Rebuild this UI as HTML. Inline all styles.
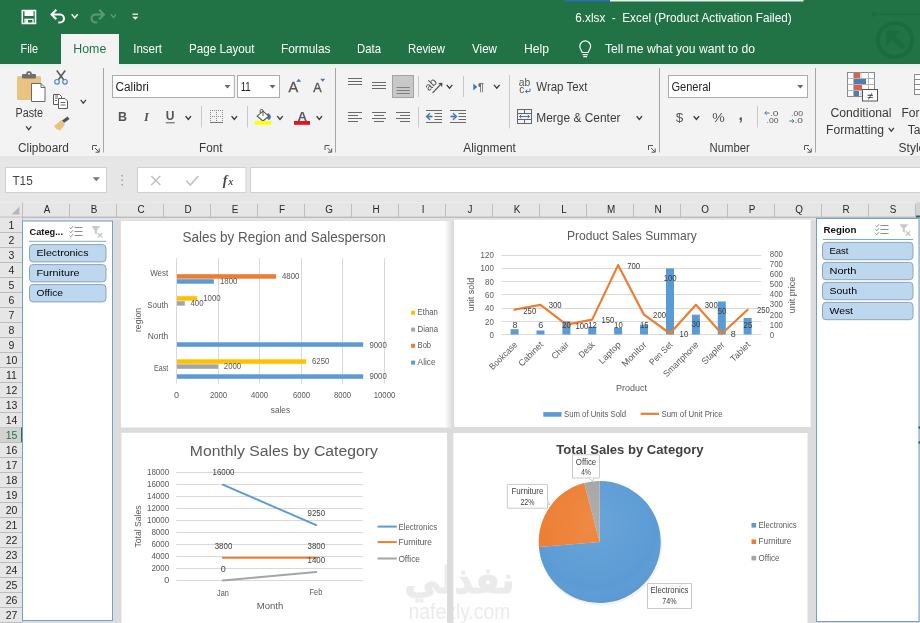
<!DOCTYPE html>
<html><head><meta charset="utf-8"><title>6.xlsx - Excel</title>
<style>
html,body{margin:0;padding:0;background:#fff;overflow:hidden}
body{width:920px;height:623px;position:relative;font-family:'Liberation Sans', 'DejaVu Sans', sans-serif}
svg{position:absolute;left:0;top:0;display:block;will-change:transform}
svg text{font-family:'Liberation Sans', 'DejaVu Sans', sans-serif;white-space:pre}
</style></head><body>
<svg width="920" height="623" viewBox="0 0 920 623">
<rect x="0" y="0" width="920" height="64" fill="#217346"/>
<rect x="564.5" y="0" width="46" height="1.5" fill="#2b6cae"/>
<rect x="610" y="0" width="193.5" height="1.5" fill="#e4efe8"/>
<g opacity="0.8"><circle cx="895" cy="40" r="17" fill="none" stroke="#1c6a3f" stroke-width="4"/><path d="M886 30.5H901L886 47z" fill="#1c6a3f"/><path d="M890 35L904 47.5" stroke="#1c6a3f" stroke-width="5"/><path d="M880 14H920" stroke="#1d6b40" stroke-width="2"/><path d="M872 10.5v7l8-3.5z" fill="#1d6b40"/></g>
<g fill="none" stroke="#fff" stroke-width="1.6"><path d="M22.3 10.5H35.5V23.5H22.3z"/></g>
<rect x="24.5" y="11" width="9" height="5" fill="#fff"/><rect x="25" y="19.3" width="8" height="4" fill="none" stroke="#fff" stroke-width="1.3"/><rect x="26" y="20" width="2" height="3" fill="#fff"/>
<path d="M52 14.5H60A4 4 0 0 1 60 22.5H58.3" fill="none" stroke="#fff" stroke-width="2.1"/><path d="M56.3 9.8L51.6 14.5L56.3 19.2" fill="none" stroke="#fff" stroke-width="2.1"/>
<path d="M71.7 14.35L74.7 17.8L77.7 14.35" fill="none" stroke="#fff" stroke-width="1.5"/>
<g opacity="0.27"><path d="M103.5 14.5H95.5A4 4 0 0 0 95.5 22.5H97.2" fill="none" stroke="#fff" stroke-width="2.1"/><path d="M99.2 9.8L103.9 14.5L99.2 19.2" fill="none" stroke="#fff" stroke-width="2.1"/></g>
<g opacity="0.27">
<path d="M110.9 14.5L113.5 17.5L116.1 14.5" fill="none" stroke="#fff" stroke-width="1.4"/>
</g>
<path d="M132.5 14.2h5.5" stroke="#fff" stroke-width="1.2"/><path d="M132.3 16.8h6l-3 3z" fill="#fff"/>
<text x="575.2" y="21.8" font-size="12.5" fill="#fff" textLength="216.5" lengthAdjust="spacingAndGlyphs">6.xlsx  -  Excel (Product Activation Failed)</text>
<rect x="61" y="34" width="58" height="31" fill="#f3f3f3"/>
<text x="20.5" y="53" font-size="13" fill="#fff" textLength="17.5" lengthAdjust="spacingAndGlyphs">File</text>
<text x="133.2" y="53" font-size="13" fill="#fff" textLength="28.8" lengthAdjust="spacingAndGlyphs">Insert</text>
<text x="189" y="53" font-size="13" fill="#fff" textLength="65.5" lengthAdjust="spacingAndGlyphs">Page Layout</text>
<text x="281" y="53" font-size="13" fill="#fff" textLength="49.5" lengthAdjust="spacingAndGlyphs">Formulas</text>
<text x="357" y="53" font-size="13" fill="#fff" textLength="24" lengthAdjust="spacingAndGlyphs">Data</text>
<text x="408" y="53" font-size="13" fill="#fff" textLength="37" lengthAdjust="spacingAndGlyphs">Review</text>
<text x="472" y="53" font-size="13" fill="#fff" textLength="25" lengthAdjust="spacingAndGlyphs">View</text>
<text x="524" y="53" font-size="13" fill="#fff" textLength="25" lengthAdjust="spacingAndGlyphs">Help</text>
<text x="73.3" y="53" font-size="13" fill="#217346" textLength="33" lengthAdjust="spacingAndGlyphs">Home</text>
<text x="605" y="53" font-size="13" fill="#fff" textLength="150" lengthAdjust="spacingAndGlyphs">Tell me what you want to do</text>
<g fill="none" stroke="#fff" stroke-width="1.2"><path d="M582.2 52.5C582 50.5 579.8 49.5 579.8 46.3A5.4 5.4 0 0 1 590.6 46.3C590.6 49.5 588.4 50.5 588.2 52.5z"/><path d="M582.6 54.6h5.2M583.3 56.6h3.8"/></g>
<rect x="0" y="64" width="920" height="93" fill="#f3f3f3"/>
<defs><linearGradient id="mint" x1="0" y1="0" x2="0" y2="1"><stop offset="0" stop-color="#e2f3ea"/><stop offset="1" stop-color="#f3f3f3"/></linearGradient></defs><rect x="0" y="64" width="920" height="5" fill="url(#mint)"/><rect x="61" y="64" width="58" height="5" fill="#f3f3f3"/>
<rect x="0" y="156.5" width="920" height="1" fill="#d6d6d6"/>
<rect x="0" y="157.5" width="920" height="45" fill="#e6e6e6"/>
<rect x="17" y="76" width="24" height="24" rx="1.5" fill="#eac282"/>
<rect x="22" y="74" width="14" height="4.5" rx="1" fill="#6f6f6f"/><rect x="26.3" y="71.3" width="5.4" height="5" rx="2" fill="#6f6f6f"/><rect x="28" y="73" width="2" height="1.8" rx="0.8" fill="#f3f3f3"/>
<path d="M31.5 83.5H41L45 87.5V101.5H31.5z" fill="#fff" stroke="#6a6a6a" stroke-width="1"/><path d="M41 83.5V87.5H45" fill="none" stroke="#6a6a6a" stroke-width="1"/>
<text x="15.5" y="117" font-size="12" fill="#3a3a3a" textLength="27.5" lengthAdjust="spacingAndGlyphs">Paste</text>
<path d="M26.099999999999998 126.4L28.7 129.7L31.3 126.4" fill="none" stroke="#3a3a3a" stroke-width="1.2"/>
<g fill="none" stroke="#5a5a5a" stroke-width="1.6"><path d="M56.8 70.5L63.8 80M65.2 70.5L58.2 80"/></g><g fill="none" stroke="#4f8ad0" stroke-width="1.2"><circle cx="57" cy="81.8" r="2.3"/><circle cx="65" cy="81.8" r="2.3"/></g>
<g fill="#fff" stroke="#5a5a5a" stroke-width="1"><path d="M53.5 94.5H59.5L61.5 96.5V104.5H53.5z"/><path d="M58.5 98.5H65L67.5 101V108.5H58.5z"/></g><path d="M55 98h3M55 100.5h2M60.5 102.5h5M60.5 105h5M55 96h3" stroke="#5a5a5a" stroke-width="0.9"/>
<path d="M80.7 99.9L83.3 103.2L85.89999999999999 99.9" fill="none" stroke="#3a3a3a" stroke-width="1.2"/>
<path d="M62 120.5L67.5 116.5L69.5 119L64 123z" fill="#555"/><path d="M54 126L61.5 120L65 124.5L60 130.5L56.5 129z" fill="#eac282"/>
<text x="18" y="152" font-size="12" fill="#3a3a3a" textLength="50.8" lengthAdjust="spacingAndGlyphs">Clipboard</text>
<path d="M92.5 150V145.5H97M95 148L99 152M99.2 148.5V152.2H95.5" fill="none" stroke="#555" stroke-width="1"/>
<path d="M103.5 68V152.5" stroke="#a6a6a6" stroke-width="1"/>
<rect x="112.5" y="75.5" width="121.8" height="22" fill="#fff" stroke="#ababab" stroke-width="1"/>
<text x="115.5" y="91" font-size="12" fill="#262626" textLength="33.5" lengthAdjust="spacingAndGlyphs">Calibri</text>
<path d="M224.5 85.0h6L227.5 88.5z" fill="#666"/>
<rect x="237.5" y="75.5" width="42" height="22" fill="#fff" stroke="#ababab" stroke-width="1"/>
<text x="240.7" y="91" font-size="12" fill="#262626" textLength="10" lengthAdjust="spacingAndGlyphs">11</text>
<path d="M269.5 85.0h6L272.5 88.5z" fill="#666"/>
<text x="288.5" y="92" font-size="14.5" fill="#555" stroke="#555" stroke-width="0.35">A</text>
<path d="M296.2 81.8h5l-2.5-3z" fill="#3f77bd"/>
<text x="313.2" y="92" font-size="12.5" fill="#555" stroke="#555" stroke-width="0.35">A</text>
<path d="M320.2 78.8h5l-2.5 3z" fill="#3f77bd"/>
<text x="118" y="120.8" font-size="12.5" fill="#555" font-weight="bold">B</text>
<text x="144" y="120.8" font-size="12.5" fill="#555" font-weight="bold" font-style="italic" style="font-family:'Liberation Serif',serif">I</text>
<text x="165.8" y="120.3" font-size="12" fill="#555" font-weight="bold">U</text>
<path d="M165.8 122.8h9" stroke="#555" stroke-width="1"/>
<path d="M185.60000000000002 116.10000000000001L188.3 119.4L191.0 116.10000000000001" fill="none" stroke="#3a3a3a" stroke-width="1.4"/>
<path d="M201.5 106V127.5" stroke="#c8c8c8" stroke-width="1"/>
<g stroke="#8a8a8a" stroke-width="1" stroke-dasharray="1 1" fill="none"><path d="M210 110.5H223M210 116.5H223"/><path d="M210.5 110V123M216.5 110V123M222.5 110V123"/></g><path d="M210 122.5H223" stroke="#777" stroke-width="1"/>
<path d="M231.60000000000002 116.10000000000001L234.3 119.4L237.0 116.10000000000001" fill="none" stroke="#3a3a3a" stroke-width="1.4"/>
<path d="M247.5 106V127.5" stroke="#c8c8c8" stroke-width="1"/>
<path d="M268 113C270.2 114.2 271.2 116 270.8 117.6C270.4 119 269.6 119.8 268.6 120L266 117z" fill="#3f77bd"/><path d="M257.2 116.2L263 111.2L268.7 116.2L263 121z" fill="#fff" stroke="#555" stroke-width="1.1"/><path d="M260.2 113V110.6a1 1 0 0 1 1-1h0.8a1 1 0 0 1 1 1V116" fill="none" stroke="#555" stroke-width="1"/>
<rect x="254.8" y="121" width="16.5" height="3.8" fill="#ffff00"/>
<path d="M277.3 116.10000000000001L280 119.4L282.7 116.10000000000001" fill="none" stroke="#3a3a3a" stroke-width="1.4"/>
<text x="297.6" y="121" font-size="13.4" fill="#5a5a5a" textLength="9.6" lengthAdjust="spacingAndGlyphs" font-weight="bold">A</text>
<rect x="294" y="121" width="16" height="3.8" fill="#e81123"/>
<path d="M316.6 116.10000000000001L319.3 119.4L322.0 116.10000000000001" fill="none" stroke="#3a3a3a" stroke-width="1.4"/>
<text x="199" y="152" font-size="12" fill="#3a3a3a" textLength="23.5" lengthAdjust="spacingAndGlyphs">Font</text>
<path d="M325.0 150V145.5H329.5M327.5 148L331.5 152M331.7 148.5V152.2H328.0" fill="none" stroke="#555" stroke-width="1"/>
<path d="M335.5 68V152.5" stroke="#a6a6a6" stroke-width="1"/>
<path d="M348 78.5h14" stroke="#6a6a6a" stroke-width="1"/>
<path d="M348 81.5h14" stroke="#6a6a6a" stroke-width="1"/>
<path d="M348 84.5h14" stroke="#6a6a6a" stroke-width="1"/>
<path d="M372 82.5h14" stroke="#6a6a6a" stroke-width="1"/>
<path d="M372 85.5h14" stroke="#6a6a6a" stroke-width="1"/>
<path d="M372 88.5h14" stroke="#6a6a6a" stroke-width="1"/>
<rect x="392.5" y="75.5" width="21" height="22" fill="#c8c8c8" stroke="#a3a3a3" stroke-width="1"/>
<path d="M396.5 87.5h13.5" stroke="#808080" stroke-width="1"/>
<path d="M396.5 90.5h13.5" stroke="#808080" stroke-width="1"/>
<path d="M396.5 93.5h13.5" stroke="#808080" stroke-width="1"/>
<path d="M418.5 76V97" stroke="#c8c8c8" stroke-width="1"/>
<text transform="translate(429 91.4) rotate(-45)" font-size="11.5" fill="#4a4a4a" textLength="12.3" lengthAdjust="spacingAndGlyphs">ab</text><path d="M432.6 92.8L441.5 83.7M441.9 83.3l-3.2 0.3M441.9 83.3l-0.3 3.2" stroke="#4a4a4a" stroke-width="1.2" fill="none"/>
<path d="M446.7 84.9L449.5 88.2L452.3 84.9" fill="none" stroke="#3a3a3a" stroke-width="1.3"/>
<path d="M348 112.5h14" stroke="#6a6a6a" stroke-width="1"/>
<path d="M348 115.5h10" stroke="#6a6a6a" stroke-width="1"/>
<path d="M348 118.5h14" stroke="#6a6a6a" stroke-width="1"/>
<path d="M348 121.5h10" stroke="#6a6a6a" stroke-width="1"/>
<path d="M372.0 112.5h14" stroke="#6a6a6a" stroke-width="1"/>
<path d="M374.0 115.5h10" stroke="#6a6a6a" stroke-width="1"/>
<path d="M372.0 118.5h14" stroke="#6a6a6a" stroke-width="1"/>
<path d="M374.0 121.5h10" stroke="#6a6a6a" stroke-width="1"/>
<path d="M396 112.5h14" stroke="#6a6a6a" stroke-width="1"/>
<path d="M400 115.5h10" stroke="#6a6a6a" stroke-width="1"/>
<path d="M396 118.5h14" stroke="#6a6a6a" stroke-width="1"/>
<path d="M400 121.5h10" stroke="#6a6a6a" stroke-width="1"/>
<path d="M418.5 107V127.5" stroke="#c8c8c8" stroke-width="1"/>
<path d="M426 110.5h16" stroke="#6a6a6a" stroke-width="1"/>
<path d="M426 122.5h16" stroke="#6a6a6a" stroke-width="1"/>
<path d="M434.5 113.5h7.5" stroke="#6a6a6a" stroke-width="1"/>
<path d="M434.5 116.5h7.5" stroke="#6a6a6a" stroke-width="1"/>
<path d="M434.5 119.5h7.5" stroke="#6a6a6a" stroke-width="1"/>
<path d="M432.5 116.5H427.5" stroke="#3f77bd" stroke-width="1.7" fill="none"/><path d="M430 113.3l-3.4 3.2l3.4 3.2" stroke="#3f77bd" stroke-width="1.5" fill="none"/>
<path d="M450 110.5h16" stroke="#6a6a6a" stroke-width="1"/>
<path d="M450 122.5h16" stroke="#6a6a6a" stroke-width="1"/>
<path d="M458.5 113.5h7.5" stroke="#6a6a6a" stroke-width="1"/>
<path d="M458.5 116.5h7.5" stroke="#6a6a6a" stroke-width="1"/>
<path d="M458.5 119.5h7.5" stroke="#6a6a6a" stroke-width="1"/>
<path d="M450.5 116.5H455.5" stroke="#3f77bd" stroke-width="1.7" fill="none"/><path d="M453 113.3l3.4 3.2l-3.4 3.2" stroke="#3f77bd" stroke-width="1.5" fill="none"/>
<path d="M463.5 76V97" stroke="#c8c8c8" stroke-width="1"/>
<path d="M473.3 83.5v7l4-3.5z" fill="#3f77bd"/>
<text x="478" y="90.5" font-size="10.5" fill="#6a6a6a" font-weight="bold">¶</text>
<path d="M494.0 84.9L496.8 88.2L499.6 84.9" fill="none" stroke="#3a3a3a" stroke-width="1.3"/>
<path d="M509.5 75V128.5" stroke="#c8c8c8" stroke-width="1"/>
<text x="518.7" y="85.8" font-size="10" fill="#555" textLength="11.5" lengthAdjust="spacingAndGlyphs">ab</text>
<text x="519.3" y="92.5" font-size="10" fill="#555">c</text>
<path d="M530 88.5V91.5H525.5M527.3 89.7l-1.9 1.8l1.9 1.8" stroke="#3f77bd" stroke-width="1" fill="none"/>
<text x="536.3" y="91" font-size="12" fill="#3a3a3a" textLength="51.2" lengthAdjust="spacingAndGlyphs">Wrap Text</text>
<g fill="none" stroke="#666" stroke-width="1"><rect x="517.5" y="109.5" width="14" height="14"/><path d="M517.5 113.5H531.5M517.5 119.5H531.5M524.5 109.5V113.5M524.5 119.5V123.5"/></g><path d="M519.5 116.5H529.5M521.3 114.8l-1.8 1.7l1.8 1.7M527.7 114.8l1.8 1.7l-1.8 1.7" stroke="#3f77bd" stroke-width="1" fill="none"/>
<text x="536.3" y="122.3" font-size="12" fill="#3a3a3a" textLength="84.2" lengthAdjust="spacingAndGlyphs">Merge &amp; Center</text>
<path d="M636.5999999999999 116.10000000000001L639.3 119.4L642.0 116.10000000000001" fill="none" stroke="#3a3a3a" stroke-width="1.4"/>
<text x="463.3" y="152" font-size="12" fill="#3a3a3a" textLength="52.5" lengthAdjust="spacingAndGlyphs">Alignment</text>
<path d="M648.5 150V145.5H653M651 148L655 152M655.2 148.5V152.2H651.5" fill="none" stroke="#555" stroke-width="1"/>
<path d="M659.5 68V152.5" stroke="#a6a6a6" stroke-width="1"/>
<rect x="668.5" y="75.5" width="139" height="22" fill="#fff" stroke="#ababab" stroke-width="1"/>
<text x="671.4" y="91" font-size="12" fill="#262626" textLength="39.4" lengthAdjust="spacingAndGlyphs">General</text>
<path d="M797.3 85.0h6L800.3 88.5z" fill="#666"/>
<text x="675.8" y="121.5" font-size="13.5" fill="#555">$</text>
<path d="M693.6999999999999 116.10000000000001L696.4 119.4L699.1 116.10000000000001" fill="none" stroke="#3a3a3a" stroke-width="1.4"/>
<text x="712.3" y="121.5" font-size="13.5" fill="#555" textLength="12.5" lengthAdjust="spacingAndGlyphs">%</text>
<text x="738.5" y="119.5" font-size="16" fill="#555" font-weight="bold">,</text>
<path d="M757.5 106V127.5" stroke="#c8c8c8" stroke-width="1"/>
<text x="770" y="115.5" font-size="8" fill="#555" textLength="8.5" lengthAdjust="spacingAndGlyphs">.0</text>
<text x="766.5" y="123.3" font-size="8" fill="#555" textLength="12" lengthAdjust="spacingAndGlyphs">.00</text>
<path d="M769.5 113H764.8M766.6 111.2l-1.8 1.8l1.8 1.8" stroke="#3f77bd" stroke-width="1" fill="none"/>
<text x="791" y="115.5" font-size="8" fill="#555" textLength="12" lengthAdjust="spacingAndGlyphs">.00</text>
<text x="794.5" y="123.3" font-size="8" fill="#555" textLength="8.5" lengthAdjust="spacingAndGlyphs">.0</text>
<path d="M789.3 121H794M792.2 119.2l1.8 1.8l-1.8 1.8" stroke="#3f77bd" stroke-width="1" fill="none"/>
<text x="709.6" y="152" font-size="12" fill="#3a3a3a" textLength="40.2" lengthAdjust="spacingAndGlyphs">Number</text>
<path d="M804.5 150V145.5H809M807 148L811 152M811.2 148.5V152.2H807.5" fill="none" stroke="#555" stroke-width="1"/>
<path d="M815.5 68V152.5" stroke="#a6a6a6" stroke-width="1"/>
<g><rect x="847.5" y="72.5" width="27" height="24" fill="#fff" stroke="#8a8a8a" stroke-width="1"/><path d="M847.5 78.5H874.5M847.5 84.5H874.5M847.5 90.5H874.5M853.5 72.5V96.5M868.5 72.5V96.5M861 72.5V96.5" stroke="#b5b5b5" stroke-width="1" fill="none"/><rect x="854" y="73" width="6" height="5" fill="#d9634a"/><rect x="854" y="79" width="12" height="5" fill="#4a7ebb"/><rect x="854" y="85" width="8" height="5" fill="#d9634a"/><rect x="854" y="91" width="5" height="5" fill="#4a7ebb"/><rect x="862.5" y="89.5" width="15" height="11.5" fill="#fff" stroke="#555" stroke-width="1"/></g>
<text x="870" y="99.5" font-size="11" fill="#333" text-anchor="middle">≠</text>
<text x="830.5" y="117" font-size="12" fill="#3a3a3a" textLength="61" lengthAdjust="spacingAndGlyphs">Conditional</text>
<text x="826" y="134" font-size="12" fill="#3a3a3a" textLength="58" lengthAdjust="spacingAndGlyphs">Formatting</text>
<path d="M888.6999999999999 127.9L891.3 131.2L893.9 127.9" fill="none" stroke="#3a3a3a" stroke-width="1.2"/>
<text x="901.5" y="117" font-size="12" fill="#3a3a3a">Format as</text>
<text x="907.8" y="134" font-size="12" fill="#3a3a3a">Table</text>
<text x="898.6" y="152" font-size="12" fill="#3a3a3a">Styles</text>
<g><rect x="914.5" y="74.5" width="10" height="20" fill="#fff" stroke="#8a8a8a"/><path d="M914.5 79.5h8M914.5 84.5h8M914.5 89.5h8" stroke="#8a8a8a"/></g>
<rect x="5.5" y="167.5" width="101" height="25" fill="#fff" stroke="#d0d0d0" stroke-width="1"/>
<text x="12.4" y="184.8" font-size="12.5" fill="#444" textLength="20.3" lengthAdjust="spacingAndGlyphs">T15</text>
<path d="M92.7 177.2h7.2L96.3 181.3z" fill="#777"/>
<g fill="#a0a0a0"><rect x="121.5" y="175" width="1.5" height="1.5"/><rect x="121.5" y="179.5" width="1.5" height="1.5"/><rect x="121.5" y="184" width="1.5" height="1.5"/></g>
<rect x="137.5" y="167.5" width="108.5" height="25" fill="#fff" stroke="#d0d0d0" stroke-width="1"/>
<path d="M151.3 176l9 9M160.3 176l-9 9" stroke="#c0c0c0" stroke-width="1.6" fill="none"/>
<path d="M186.3 180.8l4 4.2l8-9" stroke="#c0c0c0" stroke-width="1.6" fill="none"/>
<text x="222.8" y="185" font-size="14" fill="#4a4a4a" font-weight="bold" font-style="italic" style="font-family:'Liberation Serif',serif">f</text>
<text x="228.3" y="185.3" font-size="10" fill="#4a4a4a" font-weight="bold" font-style="italic" style="font-family:'Liberation Serif',serif">x</text>
<rect x="250.5" y="167.5" width="680" height="25" fill="#fff" stroke="#d0d0d0" stroke-width="1"/>
<rect x="0" y="202.5" width="920" height="15" fill="#e6e6e6"/>
<rect x="0" y="217.5" width="920" height="406" fill="#dcdcdc"/>
<rect x="22.5" y="217.5" width="898" height="3" fill="#e4e4e4"/>
<rect x="0" y="216.7" width="920" height="1" fill="#ababab"/>
<path d="M19.5 206.5V214.5H11.5z" fill="#b7b7b7"/>
<path d="M22.5 204V217" stroke="#bdbdbd" stroke-width="1"/>
<text transform="translate(47.0 213) scale(0.9 1)" font-size="11" fill="#262626" text-anchor="middle">A</text>
<path d="M69.5 204V217" stroke="#bdbdbd" stroke-width="1"/>
<text transform="translate(94.0 213) scale(0.9 1)" font-size="11" fill="#262626" text-anchor="middle">B</text>
<path d="M116.5 204V217" stroke="#bdbdbd" stroke-width="1"/>
<text transform="translate(141.0 213) scale(0.9 1)" font-size="11" fill="#262626" text-anchor="middle">C</text>
<path d="M163.5 204V217" stroke="#bdbdbd" stroke-width="1"/>
<text transform="translate(188.0 213) scale(0.9 1)" font-size="11" fill="#262626" text-anchor="middle">D</text>
<path d="M210.5 204V217" stroke="#bdbdbd" stroke-width="1"/>
<text transform="translate(235.0 213) scale(0.9 1)" font-size="11" fill="#262626" text-anchor="middle">E</text>
<path d="M257.5 204V217" stroke="#bdbdbd" stroke-width="1"/>
<text transform="translate(282.0 213) scale(0.9 1)" font-size="11" fill="#262626" text-anchor="middle">F</text>
<path d="M304.5 204V217" stroke="#bdbdbd" stroke-width="1"/>
<text transform="translate(329.0 213) scale(0.9 1)" font-size="11" fill="#262626" text-anchor="middle">G</text>
<path d="M351.5 204V217" stroke="#bdbdbd" stroke-width="1"/>
<text transform="translate(376.0 213) scale(0.9 1)" font-size="11" fill="#262626" text-anchor="middle">H</text>
<path d="M398.5 204V217" stroke="#bdbdbd" stroke-width="1"/>
<text transform="translate(423.0 213) scale(0.9 1)" font-size="11" fill="#262626" text-anchor="middle">I</text>
<path d="M445.5 204V217" stroke="#bdbdbd" stroke-width="1"/>
<text transform="translate(470.0 213) scale(0.9 1)" font-size="11" fill="#262626" text-anchor="middle">J</text>
<path d="M492.5 204V217" stroke="#bdbdbd" stroke-width="1"/>
<text transform="translate(517.0 213) scale(0.9 1)" font-size="11" fill="#262626" text-anchor="middle">K</text>
<path d="M539.5 204V217" stroke="#bdbdbd" stroke-width="1"/>
<text transform="translate(564.0 213) scale(0.9 1)" font-size="11" fill="#262626" text-anchor="middle">L</text>
<path d="M586.5 204V217" stroke="#bdbdbd" stroke-width="1"/>
<text transform="translate(611.0 213) scale(0.9 1)" font-size="11" fill="#262626" text-anchor="middle">M</text>
<path d="M633.5 204V217" stroke="#bdbdbd" stroke-width="1"/>
<text transform="translate(658.0 213) scale(0.9 1)" font-size="11" fill="#262626" text-anchor="middle">N</text>
<path d="M680.5 204V217" stroke="#bdbdbd" stroke-width="1"/>
<text transform="translate(705.0 213) scale(0.9 1)" font-size="11" fill="#262626" text-anchor="middle">O</text>
<path d="M727.5 204V217" stroke="#bdbdbd" stroke-width="1"/>
<text transform="translate(752.0 213) scale(0.9 1)" font-size="11" fill="#262626" text-anchor="middle">P</text>
<path d="M774.5 204V217" stroke="#bdbdbd" stroke-width="1"/>
<text transform="translate(799.0 213) scale(0.9 1)" font-size="11" fill="#262626" text-anchor="middle">Q</text>
<path d="M821.5 204V217" stroke="#bdbdbd" stroke-width="1"/>
<text transform="translate(846.0 213) scale(0.9 1)" font-size="11" fill="#262626" text-anchor="middle">R</text>
<path d="M868.5 204V217" stroke="#bdbdbd" stroke-width="1"/>
<text transform="translate(893.0 213) scale(0.9 1)" font-size="11" fill="#262626" text-anchor="middle">S</text>
<path d="M915.5 204V217" stroke="#bdbdbd" stroke-width="1"/>
<rect x="916" y="202.5" width="4" height="15" fill="#d2d2d2"/><rect x="916" y="215.5" width="4" height="2" fill="#217346"/>
<rect x="0" y="217.5" width="22.5" height="406" fill="#e6e6e6"/>
<path d="M22.5 202.5V623" stroke="#bdbdbd" stroke-width="1"/>
<path d="M0 232.5H22.5" stroke="#bdbdbd" stroke-width="1"/>
<text x="11.5" y="228.8" font-size="10.5" fill="#262626" text-anchor="middle">1</text>
<path d="M0 247.5H22.5" stroke="#bdbdbd" stroke-width="1"/>
<text x="11.5" y="243.8" font-size="10.5" fill="#262626" text-anchor="middle">2</text>
<path d="M0 262.5H22.5" stroke="#bdbdbd" stroke-width="1"/>
<text x="11.5" y="258.8" font-size="10.5" fill="#262626" text-anchor="middle">3</text>
<path d="M0 277.5H22.5" stroke="#bdbdbd" stroke-width="1"/>
<text x="11.5" y="273.8" font-size="10.5" fill="#262626" text-anchor="middle">4</text>
<path d="M0 292.5H22.5" stroke="#bdbdbd" stroke-width="1"/>
<text x="11.5" y="288.8" font-size="10.5" fill="#262626" text-anchor="middle">5</text>
<path d="M0 307.5H22.5" stroke="#bdbdbd" stroke-width="1"/>
<text x="11.5" y="303.8" font-size="10.5" fill="#262626" text-anchor="middle">6</text>
<path d="M0 322.5H22.5" stroke="#bdbdbd" stroke-width="1"/>
<text x="11.5" y="318.8" font-size="10.5" fill="#262626" text-anchor="middle">7</text>
<path d="M0 337.5H22.5" stroke="#bdbdbd" stroke-width="1"/>
<text x="11.5" y="333.8" font-size="10.5" fill="#262626" text-anchor="middle">8</text>
<path d="M0 352.5H22.5" stroke="#bdbdbd" stroke-width="1"/>
<text x="11.5" y="348.8" font-size="10.5" fill="#262626" text-anchor="middle">9</text>
<path d="M0 367.5H22.5" stroke="#bdbdbd" stroke-width="1"/>
<text x="11.5" y="363.8" font-size="10.5" fill="#262626" text-anchor="middle">10</text>
<path d="M0 382.5H22.5" stroke="#bdbdbd" stroke-width="1"/>
<text x="11.5" y="378.8" font-size="10.5" fill="#262626" text-anchor="middle">11</text>
<path d="M0 397.5H22.5" stroke="#bdbdbd" stroke-width="1"/>
<text x="11.5" y="393.8" font-size="10.5" fill="#262626" text-anchor="middle">12</text>
<path d="M0 412.5H22.5" stroke="#bdbdbd" stroke-width="1"/>
<text x="11.5" y="408.8" font-size="10.5" fill="#262626" text-anchor="middle">13</text>
<path d="M0 427.5H22.5" stroke="#bdbdbd" stroke-width="1"/>
<text x="11.5" y="423.8" font-size="10.5" fill="#262626" text-anchor="middle">14</text>
<rect x="0" y="427.5" width="22" height="15" fill="#d2d2d2"/><rect x="21" y="427.5" width="2" height="15.5" fill="#217346"/>
<path d="M0 442.5H22.5" stroke="#bdbdbd" stroke-width="1"/>
<text x="11.5" y="438.8" font-size="10.5" fill="#217346" text-anchor="middle">15</text>
<path d="M0 457.5H22.5" stroke="#bdbdbd" stroke-width="1"/>
<text x="11.5" y="453.8" font-size="10.5" fill="#262626" text-anchor="middle">16</text>
<path d="M0 472.5H22.5" stroke="#bdbdbd" stroke-width="1"/>
<text x="11.5" y="468.8" font-size="10.5" fill="#262626" text-anchor="middle">17</text>
<path d="M0 487.5H22.5" stroke="#bdbdbd" stroke-width="1"/>
<text x="11.5" y="483.8" font-size="10.5" fill="#262626" text-anchor="middle">18</text>
<path d="M0 502.5H22.5" stroke="#bdbdbd" stroke-width="1"/>
<text x="11.5" y="498.8" font-size="10.5" fill="#262626" text-anchor="middle">19</text>
<path d="M0 517.5H22.5" stroke="#bdbdbd" stroke-width="1"/>
<text x="11.5" y="513.8" font-size="10.5" fill="#262626" text-anchor="middle">20</text>
<path d="M0 532.5H22.5" stroke="#bdbdbd" stroke-width="1"/>
<text x="11.5" y="528.8" font-size="10.5" fill="#262626" text-anchor="middle">21</text>
<path d="M0 547.5H22.5" stroke="#bdbdbd" stroke-width="1"/>
<text x="11.5" y="543.8" font-size="10.5" fill="#262626" text-anchor="middle">22</text>
<path d="M0 562.5H22.5" stroke="#bdbdbd" stroke-width="1"/>
<text x="11.5" y="558.8" font-size="10.5" fill="#262626" text-anchor="middle">23</text>
<path d="M0 577.5H22.5" stroke="#bdbdbd" stroke-width="1"/>
<text x="11.5" y="573.8" font-size="10.5" fill="#262626" text-anchor="middle">24</text>
<path d="M0 592.5H22.5" stroke="#bdbdbd" stroke-width="1"/>
<text x="11.5" y="588.8" font-size="10.5" fill="#262626" text-anchor="middle">25</text>
<path d="M0 607.5H22.5" stroke="#bdbdbd" stroke-width="1"/>
<text x="11.5" y="603.8" font-size="10.5" fill="#262626" text-anchor="middle">26</text>
<path d="M0 622.5H22.5" stroke="#bdbdbd" stroke-width="1"/>
<text x="11.5" y="618.8" font-size="10.5" fill="#262626" text-anchor="middle">27</text>
<rect x="22.5" y="221" width="90" height="399.5" fill="#fff" stroke="#6fa0cf" stroke-width="1"/>
<text x="29.5" y="234.8" font-size="9.6" fill="#111" textLength="33.5" lengthAdjust="spacingAndGlyphs" font-weight="bold">Categ...</text>
<path d="M29.0 241.3H106.0" stroke="#7fa8d4" stroke-width="1"/>
<g stroke="#8c8c8c" stroke-width="1" fill="none"><path d="M74.5 227.5h8M74.5 231.5h8M74.5 235.5h8"/><path d="M69.5 227.5l1.3 1.3l2.2-2.6M69.5 231.5l1.3 1.3l2.2-2.6M69.5 235.5l1.3 1.3l2.2-2.6"/></g>
<path d="M91.3 226h9l-3.5 4.2v4.3l-2 -1.2v-3.1z" fill="#c9c9c9"/><path d="M97.8 233l4.5 4.5M102.3 233l-4.5 4.5" stroke="#c9c9c9" stroke-width="1.3"/>
<rect x="29.5" y="244.6" width="76.5" height="17.3" rx="3.5" fill="#bdd7ee" stroke="#8aa4bd" stroke-width="1"/>
<text x="36.5" y="256.2" font-size="9.8" fill="#000" textLength="52" lengthAdjust="spacingAndGlyphs">Electronics</text>
<rect x="29.5" y="264.6" width="76.5" height="17.3" rx="3.5" fill="#bdd7ee" stroke="#8aa4bd" stroke-width="1"/>
<text x="36.5" y="276.20000000000005" font-size="9.8" fill="#000" textLength="43" lengthAdjust="spacingAndGlyphs">Furniture</text>
<rect x="29.5" y="284.6" width="76.5" height="17.3" rx="3.5" fill="#bdd7ee" stroke="#8aa4bd" stroke-width="1"/>
<text x="36.5" y="296.20000000000005" font-size="9.8" fill="#000" textLength="26.5" lengthAdjust="spacingAndGlyphs">Office</text>
<rect x="816.5" y="218.5" width="102.5" height="403" fill="#fff" stroke="#6fa0cf" stroke-width="1"/>
<text x="823.5" y="233.0" font-size="9.6" fill="#111" textLength="33" lengthAdjust="spacingAndGlyphs" font-weight="bold">Region</text>
<path d="M823.0 239.5H913.0" stroke="#7fa8d4" stroke-width="1"/>
<g stroke="#8c8c8c" stroke-width="1" fill="none"><path d="M880.5 225.5h8M880.5 229.5h8M880.5 233.5h8"/><path d="M875.5 225.5l1.3 1.3l2.2-2.6M875.5 229.5l1.3 1.3l2.2-2.6M875.5 233.5l1.3 1.3l2.2-2.6"/></g>
<path d="M899.3 224.2h9l-3.5 4.2v4.3l-2 -1.2v-3.1z" fill="#c9c9c9"/><path d="M905.8 231.2l4.5 4.5M910.3 231.2l-4.5 4.5" stroke="#c9c9c9" stroke-width="1.3"/>
<rect x="822.5" y="242.4" width="90.5" height="17.3" rx="3.5" fill="#bdd7ee" stroke="#8aa4bd" stroke-width="1"/>
<text x="829.5" y="254.0" font-size="9.8" fill="#000" textLength="19" lengthAdjust="spacingAndGlyphs">East</text>
<rect x="822.5" y="262.4" width="90.5" height="17.3" rx="3.5" fill="#bdd7ee" stroke="#8aa4bd" stroke-width="1"/>
<text x="829.5" y="274.0" font-size="9.8" fill="#000" textLength="27" lengthAdjust="spacingAndGlyphs">North</text>
<rect x="822.5" y="282.4" width="90.5" height="17.3" rx="3.5" fill="#bdd7ee" stroke="#8aa4bd" stroke-width="1"/>
<text x="829.5" y="294.0" font-size="9.8" fill="#000" textLength="27.5" lengthAdjust="spacingAndGlyphs">South</text>
<rect x="822.5" y="302.4" width="90.5" height="17.3" rx="3.5" fill="#bdd7ee" stroke="#8aa4bd" stroke-width="1"/>
<text x="829.5" y="314.0" font-size="9.8" fill="#000" textLength="23.5" lengthAdjust="spacingAndGlyphs">West</text>
<rect x="918.5" y="426.5" width="2" height="2" fill="#1d5a38"/><rect x="918.5" y="441.5" width="2" height="2" fill="#1d5a38"/>
<rect x="121" y="221" width="325" height="206.5" fill="#fff"/>
<text x="182.5" y="241.8" font-size="14" fill="#595959" textLength="203.3" lengthAdjust="spacingAndGlyphs">Sales by Region and Salesperson</text>
<path d="M176.5 258V383.5" stroke="#d9d9d9" stroke-width="1"/>
<text x="176.5" y="398.24" font-size="9" fill="#595959" text-anchor="middle">0</text>
<path d="M218.5 258V383.5" stroke="#d9d9d9" stroke-width="1"/>
<text x="218.5" y="398.24" font-size="9" fill="#595959" text-anchor="middle" textLength="17.2" lengthAdjust="spacingAndGlyphs">2000</text>
<path d="M259.5 258V383.5" stroke="#d9d9d9" stroke-width="1"/>
<text x="259.5" y="398.24" font-size="9" fill="#595959" text-anchor="middle" textLength="17.2" lengthAdjust="spacingAndGlyphs">4000</text>
<path d="M301.5 258V383.5" stroke="#d9d9d9" stroke-width="1"/>
<text x="301.5" y="398.24" font-size="9" fill="#595959" text-anchor="middle" textLength="17.2" lengthAdjust="spacingAndGlyphs">6000</text>
<path d="M342.5 258V383.5" stroke="#d9d9d9" stroke-width="1"/>
<text x="342.5" y="398.24" font-size="9" fill="#595959" text-anchor="middle" textLength="17.2" lengthAdjust="spacingAndGlyphs">8000</text>
<path d="M384.5 258V383.5" stroke="#d9d9d9" stroke-width="1"/>
<text x="384.5" y="398.24" font-size="9" fill="#595959" text-anchor="middle" textLength="21.5" lengthAdjust="spacingAndGlyphs">10000</text>
<rect x="177.0" y="274.2" width="99.1" height="4.5" fill="#ed7d31"/>
<rect x="177.0" y="279.2" width="36.9" height="4.5" fill="#5b9bd5"/>
<rect x="177.0" y="296.2" width="20.2" height="4.5" fill="#ffc000"/>
<rect x="177.0" y="301.2" width="7.8" height="4.5" fill="#a5a5a5"/>
<rect x="177.0" y="342.3" width="186.2" height="4.5" fill="#5b9bd5"/>
<rect x="177.0" y="359.3" width="129.2" height="4.5" fill="#ffc000"/>
<rect x="177.0" y="364.3" width="41.0" height="4.5" fill="#a5a5a5"/>
<rect x="177.0" y="374.3" width="186.2" height="4.5" fill="#5b9bd5"/>
<text x="168.2" y="276.24" font-size="9" fill="#595959" text-anchor="end" textLength="18" lengthAdjust="spacingAndGlyphs">West</text>
<text x="168.2" y="308.24" font-size="9" fill="#595959" text-anchor="end" textLength="21" lengthAdjust="spacingAndGlyphs">South</text>
<text x="168.2" y="339.24" font-size="9" fill="#595959" text-anchor="end" textLength="20.5" lengthAdjust="spacingAndGlyphs">North</text>
<text x="168.2" y="371.44" font-size="9" fill="#595959" text-anchor="end" textLength="14.3" lengthAdjust="spacingAndGlyphs">East</text>
<text x="282" y="279.44" font-size="9" fill="#595959" textLength="17.4" lengthAdjust="spacingAndGlyphs">4800</text>
<text x="220" y="284.44" font-size="9" fill="#595959" textLength="17.4" lengthAdjust="spacingAndGlyphs">1800</text>
<text x="203.2" y="301.24" font-size="9" fill="#595959" textLength="17.4" lengthAdjust="spacingAndGlyphs">1000</text>
<text x="190.5" y="306.44" font-size="9" fill="#595959" textLength="13.049999999999999" lengthAdjust="spacingAndGlyphs">400</text>
<text x="369.4" y="347.84" font-size="9" fill="#595959" textLength="17.4" lengthAdjust="spacingAndGlyphs">9000</text>
<text x="312" y="364.24" font-size="9" fill="#595959" textLength="17.4" lengthAdjust="spacingAndGlyphs">6250</text>
<text x="223.8" y="369.04" font-size="9" fill="#595959" textLength="17.4" lengthAdjust="spacingAndGlyphs">2000</text>
<text x="369.4" y="378.84" font-size="9" fill="#595959" textLength="17.4" lengthAdjust="spacingAndGlyphs">9000</text>
<text x="280.4" y="413.24" font-size="9" fill="#595959" text-anchor="middle" textLength="19.3" lengthAdjust="spacingAndGlyphs">sales</text>
<text transform="translate(140.5 320) rotate(-90)" font-size="9" fill="#595959" text-anchor="middle" textLength="24" lengthAdjust="spacingAndGlyphs">region</text>
<rect x="411.1" y="310.8" width="4" height="4" fill="#ffc000"/>
<text x="417.6" y="315.24" font-size="9" fill="#595959" textLength="20.2" lengthAdjust="spacingAndGlyphs">Ethan</text>
<rect x="411.1" y="327.6" width="4" height="4" fill="#a5a5a5"/>
<text x="417.6" y="332.04" font-size="9" fill="#595959" textLength="20.5" lengthAdjust="spacingAndGlyphs">Diana</text>
<rect x="411.1" y="343.8" width="4" height="4" fill="#ed7d31"/>
<text x="417.6" y="348.24" font-size="9" fill="#595959" textLength="13.5" lengthAdjust="spacingAndGlyphs">Bob</text>
<rect x="411.1" y="360.6" width="4" height="4" fill="#5b9bd5"/>
<text x="417.6" y="365.04" font-size="9" fill="#595959" textLength="18" lengthAdjust="spacingAndGlyphs">Alice</text>
<defs><linearGradient id="eg" x1="0" y1="0" x2="1" y2="0"><stop offset="0" stop-color="#ffffff"/><stop offset="1" stop-color="#d6d6d6"/></linearGradient></defs><rect x="444.5" y="221" width="9.5" height="206.5" fill="url(#eg)"/>
<rect x="454" y="220" width="356.5" height="207" fill="#fff"/>
<text x="567" y="239.7" font-size="12.2" fill="#595959" textLength="129.7" lengthAdjust="spacingAndGlyphs">Product Sales Summary</text>
<path d="M501.6 334.5H761.2" stroke="#d9d9d9" stroke-width="1"/>
<text x="493.8" y="337.94" font-size="9" fill="#595959" text-anchor="end" textLength="4.4" lengthAdjust="spacingAndGlyphs">0</text>
<path d="M501.6 321.5H761.2" stroke="#d9d9d9" stroke-width="1"/>
<text x="493.8" y="324.54" font-size="9" fill="#595959" text-anchor="end" textLength="8.8" lengthAdjust="spacingAndGlyphs">20</text>
<path d="M501.6 308.5H761.2" stroke="#d9d9d9" stroke-width="1"/>
<text x="493.8" y="311.24" font-size="9" fill="#595959" text-anchor="end" textLength="8.8" lengthAdjust="spacingAndGlyphs">40</text>
<path d="M501.6 294.5H761.2" stroke="#d9d9d9" stroke-width="1"/>
<text x="493.8" y="297.84" font-size="9" fill="#595959" text-anchor="end" textLength="8.8" lengthAdjust="spacingAndGlyphs">60</text>
<path d="M501.6 281.5H761.2" stroke="#d9d9d9" stroke-width="1"/>
<text x="493.8" y="284.54" font-size="9" fill="#595959" text-anchor="end" textLength="8.8" lengthAdjust="spacingAndGlyphs">80</text>
<path d="M501.6 268.5H761.2" stroke="#d9d9d9" stroke-width="1"/>
<text x="493.8" y="271.14" font-size="9" fill="#595959" text-anchor="end" textLength="13.200000000000001" lengthAdjust="spacingAndGlyphs">100</text>
<path d="M501.6 255.5H761.2" stroke="#d9d9d9" stroke-width="1"/>
<text x="493.8" y="257.84" font-size="9" fill="#595959" text-anchor="end" textLength="13.200000000000001" lengthAdjust="spacingAndGlyphs">120</text>
<text x="769.8" y="337.54" font-size="9" fill="#595959" textLength="4.35" lengthAdjust="spacingAndGlyphs">0</text>
<text x="769.8" y="327.54" font-size="9" fill="#595959" textLength="13.049999999999999" lengthAdjust="spacingAndGlyphs">100</text>
<text x="769.8" y="317.54" font-size="9" fill="#595959" textLength="13.049999999999999" lengthAdjust="spacingAndGlyphs">200</text>
<text x="769.8" y="307.44" font-size="9" fill="#595959" textLength="13.049999999999999" lengthAdjust="spacingAndGlyphs">300</text>
<text x="769.8" y="297.44" font-size="9" fill="#595959" textLength="13.049999999999999" lengthAdjust="spacingAndGlyphs">400</text>
<text x="769.8" y="287.44" font-size="9" fill="#595959" textLength="13.049999999999999" lengthAdjust="spacingAndGlyphs">500</text>
<text x="769.8" y="277.44" font-size="9" fill="#595959" textLength="13.049999999999999" lengthAdjust="spacingAndGlyphs">600</text>
<text x="769.8" y="267.44" font-size="9" fill="#595959" textLength="13.049999999999999" lengthAdjust="spacingAndGlyphs">700</text>
<text x="769.8" y="257.34" font-size="9" fill="#595959" textLength="13.049999999999999" lengthAdjust="spacingAndGlyphs">800</text>
<rect x="510.6" y="329.2" width="8" height="5.3" fill="#5b9bd5"/>
<rect x="536.5" y="330.5" width="8" height="4.0" fill="#5b9bd5"/>
<rect x="562.4" y="321.3" width="8" height="13.2" fill="#5b9bd5"/>
<rect x="588.2" y="326.6" width="8" height="7.9" fill="#5b9bd5"/>
<rect x="614.1" y="327.9" width="8" height="6.6" fill="#5b9bd5"/>
<rect x="640.0" y="324.6" width="8" height="9.9" fill="#5b9bd5"/>
<rect x="666.0" y="268.4" width="8" height="66.1" fill="#5b9bd5"/>
<rect x="691.9" y="314.7" width="8" height="19.8" fill="#5b9bd5"/>
<rect x="717.8" y="301.5" width="8" height="33.0" fill="#5b9bd5"/>
<rect x="743.6" y="318.0" width="8" height="16.5" fill="#5b9bd5"/>
<polyline points="514.6,309.7 540.5,304.8 566.4,324.6 592.2,319.6 618.1,265.1 644.0,314.7 670.0,333.5 695.9,304.8 721.8,333.7 747.6,309.7" fill="none" stroke="#ed7d31" stroke-width="2.2" stroke-linejoin="round" stroke-linecap="round"/>
<text x="514.9" y="328.04" font-size="9" fill="#404040" text-anchor="middle">8</text>
<text x="540.8" y="328.04" font-size="9" fill="#404040" text-anchor="middle">6</text>
<text x="566.6" y="327.84" font-size="9" fill="#404040" text-anchor="middle" textLength="8.6" lengthAdjust="spacingAndGlyphs">20</text>
<text x="592.5" y="327.64" font-size="9" fill="#404040" text-anchor="middle" textLength="8.6" lengthAdjust="spacingAndGlyphs">12</text>
<text x="618.4" y="327.64" font-size="9" fill="#404040" text-anchor="middle" textLength="8.6" lengthAdjust="spacingAndGlyphs">10</text>
<text x="644.3" y="327.64" font-size="9" fill="#404040" text-anchor="middle" textLength="8.6" lengthAdjust="spacingAndGlyphs">15</text>
<text x="670.2" y="280.84" font-size="9" fill="#404040" text-anchor="middle" textLength="12.899999999999999" lengthAdjust="spacingAndGlyphs">100</text>
<text x="696.1" y="327.04" font-size="9" fill="#404040" text-anchor="middle" textLength="8.6" lengthAdjust="spacingAndGlyphs">30</text>
<text x="722.0" y="313.94" font-size="9" fill="#404040" text-anchor="middle" textLength="8.6" lengthAdjust="spacingAndGlyphs">50</text>
<text x="747.9" y="327.94" font-size="9" fill="#404040" text-anchor="middle" textLength="8.6" lengthAdjust="spacingAndGlyphs">25</text>
<text x="523.3" y="313.54" font-size="9" fill="#404040" textLength="12.899999999999999" lengthAdjust="spacingAndGlyphs">250</text>
<text x="548.7" y="308.44" font-size="9" fill="#404040" textLength="12.899999999999999" lengthAdjust="spacingAndGlyphs">300</text>
<text x="575.4" y="328.64" font-size="9" fill="#404040" textLength="12.899999999999999" lengthAdjust="spacingAndGlyphs">100</text>
<text x="601.4" y="323.44" font-size="9" fill="#404040" textLength="12.899999999999999" lengthAdjust="spacingAndGlyphs">150</text>
<text x="627.2" y="268.74" font-size="9" fill="#404040" textLength="12.899999999999999" lengthAdjust="spacingAndGlyphs">700</text>
<text x="653.1" y="318.24" font-size="9" fill="#404040" textLength="12.899999999999999" lengthAdjust="spacingAndGlyphs">200</text>
<text x="679.6" y="336.74" font-size="9" fill="#404040" textLength="8.6" lengthAdjust="spacingAndGlyphs">10</text>
<text x="704.8" y="308.44" font-size="9" fill="#404040" textLength="12.899999999999999" lengthAdjust="spacingAndGlyphs">300</text>
<text x="730.7" y="336.74" font-size="9" fill="#404040">8</text>
<text x="757" y="312.84" font-size="9" fill="#404040" textLength="12.899999999999999" lengthAdjust="spacingAndGlyphs">250</text>
<text transform="translate(517.8 345.3) rotate(-45)" font-size="9" fill="#595959" text-anchor="end" textLength="35.3" lengthAdjust="spacingAndGlyphs">Bookcase</text>
<text transform="translate(543.7 345.3) rotate(-45)" font-size="9" fill="#595959" text-anchor="end" textLength="30.7" lengthAdjust="spacingAndGlyphs">Cabinet</text>
<text transform="translate(569.6 345.3) rotate(-45)" font-size="9" fill="#595959" text-anchor="end" textLength="20.5" lengthAdjust="spacingAndGlyphs">Chair</text>
<text transform="translate(595.5 345.3) rotate(-45)" font-size="9" fill="#595959" text-anchor="end" textLength="18.6" lengthAdjust="spacingAndGlyphs">Desk</text>
<text transform="translate(621.4 345.3) rotate(-45)" font-size="9" fill="#595959" text-anchor="end" textLength="27.0" lengthAdjust="spacingAndGlyphs">Laptop</text>
<text transform="translate(647.2 345.3) rotate(-45)" font-size="9" fill="#595959" text-anchor="end" textLength="31.2" lengthAdjust="spacingAndGlyphs">Monitor</text>
<text transform="translate(673.2 345.3) rotate(-45)" font-size="9" fill="#595959" text-anchor="end" textLength="28.8" lengthAdjust="spacingAndGlyphs">Pen Set</text>
<text transform="translate(699.1 345.3) rotate(-45)" font-size="9" fill="#595959" text-anchor="end" textLength="45.6" lengthAdjust="spacingAndGlyphs">Smartphone</text>
<text transform="translate(725.0 345.3) rotate(-45)" font-size="9" fill="#595959" text-anchor="end" textLength="27.9" lengthAdjust="spacingAndGlyphs">Stapler</text>
<text transform="translate(750.9 345.3) rotate(-45)" font-size="9" fill="#595959" text-anchor="end" textLength="24.2" lengthAdjust="spacingAndGlyphs">Tablet</text>
<text x="631.6" y="391.44" font-size="9" fill="#595959" text-anchor="middle" textLength="31" lengthAdjust="spacingAndGlyphs">Product</text>
<text transform="translate(474.3 294.6) rotate(-90)" font-size="9" fill="#595959" text-anchor="middle" textLength="33.5" lengthAdjust="spacingAndGlyphs">unit sold</text>
<text transform="translate(795 295) rotate(-90)" font-size="9" fill="#595959" text-anchor="middle" textLength="36.5" lengthAdjust="spacingAndGlyphs">unit price</text>
<rect x="543.3" y="412.1" width="18.2" height="4.6" fill="#5b9bd5"/>
<text x="564" y="417.24" font-size="9" fill="#595959" textLength="62" lengthAdjust="spacingAndGlyphs">Sum of Units Sold</text>
<path d="M640.6 413.8H659" stroke="#ed7d31" stroke-width="2.2"/>
<text x="661.5" y="417.24" font-size="9" fill="#595959" textLength="61" lengthAdjust="spacingAndGlyphs">Sum of Unit Price</text>
<rect x="121.5" y="432.8" width="325.5" height="190.2" fill="#fff"/>
<text x="189.8" y="455.8" font-size="15.3" fill="#595959" textLength="188" lengthAdjust="spacingAndGlyphs">Monthly Sales by Category</text>
<path d="M176.2 580.5H362.8" stroke="#d9d9d9" stroke-width="1"/>
<text x="169.2" y="583.14" font-size="9" fill="#595959" text-anchor="end">0</text>
<path d="M176.2 568.5H362.8" stroke="#d9d9d9" stroke-width="1"/>
<text x="169.2" y="571.14" font-size="9" fill="#595959" text-anchor="end" textLength="17.8" lengthAdjust="spacingAndGlyphs">2000</text>
<path d="M176.2 556.5H362.8" stroke="#d9d9d9" stroke-width="1"/>
<text x="169.2" y="559.14" font-size="9" fill="#595959" text-anchor="end" textLength="17.8" lengthAdjust="spacingAndGlyphs">4000</text>
<path d="M176.2 544.5H362.8" stroke="#d9d9d9" stroke-width="1"/>
<text x="169.2" y="547.04" font-size="9" fill="#595959" text-anchor="end" textLength="17.8" lengthAdjust="spacingAndGlyphs">6000</text>
<path d="M176.2 532.5H362.8" stroke="#d9d9d9" stroke-width="1"/>
<text x="169.2" y="535.04" font-size="9" fill="#595959" text-anchor="end" textLength="17.8" lengthAdjust="spacingAndGlyphs">8000</text>
<path d="M176.2 520.5H362.8" stroke="#d9d9d9" stroke-width="1"/>
<text x="169.2" y="523.04" font-size="9" fill="#595959" text-anchor="end" textLength="22.25" lengthAdjust="spacingAndGlyphs">10000</text>
<path d="M176.2 508.5H362.8" stroke="#d9d9d9" stroke-width="1"/>
<text x="169.2" y="511.04" font-size="9" fill="#595959" text-anchor="end" textLength="22.25" lengthAdjust="spacingAndGlyphs">12000</text>
<path d="M176.2 496.5H362.8" stroke="#d9d9d9" stroke-width="1"/>
<text x="169.2" y="499.04" font-size="9" fill="#595959" text-anchor="end" textLength="22.25" lengthAdjust="spacingAndGlyphs">14000</text>
<path d="M176.2 484.5H362.8" stroke="#d9d9d9" stroke-width="1"/>
<text x="169.2" y="486.94" font-size="9" fill="#595959" text-anchor="end" textLength="22.25" lengthAdjust="spacingAndGlyphs">16000</text>
<path d="M176.2 472.5H362.8" stroke="#d9d9d9" stroke-width="1"/>
<text x="169.2" y="474.94" font-size="9" fill="#595959" text-anchor="end" textLength="22.25" lengthAdjust="spacingAndGlyphs">18000</text>
<path d="M222.8 484.7L316.2 525.1" stroke="#5b9bd5" stroke-width="2" stroke-linecap="round"/>
<path d="M222.8 557.7L316.2 557.7" stroke="#ed7d31" stroke-width="2" stroke-linecap="round"/>
<path d="M222.8 580.5L316.2 572.1" stroke="#a5a5a5" stroke-width="2" stroke-linecap="round"/>
<text x="223.5" y="474.74" font-size="9" fill="#404040" text-anchor="middle" textLength="22.0" lengthAdjust="spacingAndGlyphs">16000</text>
<text x="223.5" y="549.44" font-size="9" fill="#404040" text-anchor="middle" textLength="17.6" lengthAdjust="spacingAndGlyphs">3800</text>
<text x="223.3" y="571.74" font-size="9" fill="#404040" text-anchor="middle">0</text>
<text x="316.3" y="516.24" font-size="9" fill="#404040" text-anchor="middle" textLength="17.6" lengthAdjust="spacingAndGlyphs">9250</text>
<text x="316.3" y="549.34" font-size="9" fill="#404040" text-anchor="middle" textLength="17.6" lengthAdjust="spacingAndGlyphs">3800</text>
<text x="316.3" y="563.34" font-size="9" fill="#404040" text-anchor="middle" textLength="17.6" lengthAdjust="spacingAndGlyphs">1400</text>
<text x="222.9" y="595.54" font-size="9" fill="#595959" text-anchor="middle" textLength="11.8" lengthAdjust="spacingAndGlyphs">Jan</text>
<text x="315.9" y="595.44" font-size="9" fill="#595959" text-anchor="middle" textLength="12.7" lengthAdjust="spacingAndGlyphs">Feb</text>
<text x="270" y="609.12" font-size="9.5" fill="#595959" text-anchor="middle" textLength="26.5" lengthAdjust="spacingAndGlyphs">Month</text>
<text transform="translate(141.3 526.5) rotate(-90)" font-size="9.5" fill="#595959" text-anchor="middle" textLength="42" lengthAdjust="spacingAndGlyphs">Total Sales</text>
<path d="M377.6 526.6H396.8" stroke="#5b9bd5" stroke-width="2"/>
<text x="398.4" y="529.84" font-size="9" fill="#595959" textLength="38.7" lengthAdjust="spacingAndGlyphs">Electronics</text>
<path d="M377.6 542.1H396.8" stroke="#ed7d31" stroke-width="2"/>
<text x="398.4" y="545.34" font-size="9" fill="#595959" textLength="33.4" lengthAdjust="spacingAndGlyphs">Furniture</text>
<path d="M377.6 558.5H396.8" stroke="#a5a5a5" stroke-width="2"/>
<text x="398.4" y="561.74" font-size="9" fill="#595959" textLength="21.6" lengthAdjust="spacingAndGlyphs">Office</text>
<rect x="453.2" y="433" width="354.3" height="190" fill="#fff"/>
<text x="556.3" y="454" font-size="13" fill="#404040" textLength="147.2" lengthAdjust="spacingAndGlyphs" font-weight="bold">Total Sales by Category</text>
<defs><radialGradient id="pg" cx="0.45" cy="0.35" r="0.75"><stop offset="0" stop-color="#fff" stop-opacity="0.10"/><stop offset="0.7" stop-color="#fff" stop-opacity="0"/><stop offset="1" stop-color="#000" stop-opacity="0.12"/></radialGradient></defs>
<ellipse cx="600.7" cy="544" rx="61.5" ry="61.5" fill="#000" opacity="0.05"/>
<path d="M599.7 542L599.7 481.0A61 61 0 1 1 538.9 546.89z" fill="#5b9bd5"/>
<path d="M599.7 542L538.9 546.89A61 61 0 0 1 584.2 483.0z" fill="#ed7d31"/>
<path d="M599.7 542L584.2 483.0A61 61 0 0 1 599.7 481.0z" fill="#a5a5a5"/>
<circle cx="599.7" cy="542" r="61" fill="url(#pg)"/>
<path d="M572.5 454.8H599.5V478H572.5z" fill="#fff" stroke="#c9c9c9" stroke-width="1"/>
<path d="M588.5 478L592.6 481L594 478" fill="#fff" stroke="#c9c9c9" stroke-width="1"/>
<text x="586.0" y="464.6" font-size="8.6" fill="#404040" text-anchor="middle" textLength="20.5" lengthAdjust="spacingAndGlyphs">Office</text>
<text x="586.0" y="475.4" font-size="8.6" fill="#404040" text-anchor="middle" textLength="9.5" lengthAdjust="spacingAndGlyphs">4%</text>
<path d="M507.3 484.4H547.5V508.2H507.3z" fill="#fff" stroke="#c9c9c9" stroke-width="1"/>
<path d="M547.5 500L549.8 504.5L547.5 504" fill="#fff" stroke="#c9c9c9" stroke-width="1"/>
<text x="527.4" y="494.1" font-size="8.6" fill="#404040" text-anchor="middle" textLength="32" lengthAdjust="spacingAndGlyphs">Furniture</text>
<text x="527.4" y="505.2" font-size="8.6" fill="#404040" text-anchor="middle" textLength="14" lengthAdjust="spacingAndGlyphs">22%</text>
<path d="M647.5 583.5H691.5V608.5H647.5z" fill="#fff" stroke="#c9c9c9" stroke-width="1"/>
<text x="669.5" y="593.3" font-size="8.6" fill="#404040" text-anchor="middle" textLength="38" lengthAdjust="spacingAndGlyphs">Electronics</text>
<text x="669.5" y="604.1" font-size="8.6" fill="#404040" text-anchor="middle" textLength="14.3" lengthAdjust="spacingAndGlyphs">74%</text>
<rect x="751.5" y="523.0" width="4.6" height="4.6" fill="#5b9bd5"/>
<text x="758.6" y="527.74" font-size="9" fill="#595959" textLength="38.1" lengthAdjust="spacingAndGlyphs">Electronics</text>
<rect x="751.5" y="539.4" width="4.6" height="4.6" fill="#ed7d31"/>
<text x="758.6" y="544.14" font-size="9" fill="#595959" textLength="32.8" lengthAdjust="spacingAndGlyphs">Furniture</text>
<rect x="751.5" y="555.8" width="4.6" height="4.6" fill="#a5a5a5"/>
<text x="758.6" y="560.54" font-size="9" fill="#595959" textLength="20.8" lengthAdjust="spacingAndGlyphs">Office</text>
<g opacity="0.55">
<text transform="translate(459.5 593) scale(0.97 1)" font-size="37" font-weight="bold" fill="#dcdcdc" text-anchor="middle" style="font-family:'DejaVu Sans',sans-serif" direction="rtl" stroke="#dcdcdc" stroke-width="1.2">نفذلي</text>
<text x="408.5" y="619.3" font-size="22.5" fill="#dcdcdc" textLength="102" lengthAdjust="spacingAndGlyphs">nafezly.com</text>
</g>
<rect x="447" y="433" width="6.2" height="190" fill="#dcdcdc"/>
</svg>
</body></html>
